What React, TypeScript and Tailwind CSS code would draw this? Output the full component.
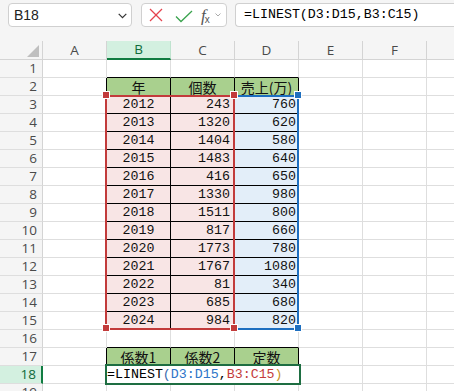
import React from 'react';

const years = [2012, 2013, 2014, 2015, 2016, 2017, 2018, 2019, 2020, 2021, 2022, 2023, 2024];
const counts = [243, 1320, 1404, 1483, 416, 1330, 1511, 817, 1773, 1767, 81, 685, 984];
const sales = [760, 620, 580, 640, 650, 980, 800, 660, 780, 1080, 340, 680, 820];
const COLS = ['A', 'B', 'C', 'D', 'E', 'F', 'G'];
const ROWS = Array.from({ length: 19 }, (_, i) => i + 1);

const inTable = (r: number, c: number) =>
  ((r >= 2 && r <= 15) || r === 17) && c >= 1 && c <= 3;

type CellInfo = { text?: string; align?: 'center' | 'right'; bg?: string; kanji?: boolean; pad?: string };

function cellInfo(r: number, c: number): CellInfo {
  if (r === 2 || r === 17) {
    const labels = r === 2 ? ['年', '個数', '売上(万)'] : ['係数1', '係数2', '定数'];
    if (c >= 1 && c <= 3) return { text: labels[c - 1], align: 'center', bg: 'bg-[#a9d08e]', kanji: true };
  }
  if (r >= 3 && r <= 15) {
    const i = r - 3;
    if (c === 1) return { text: String(years[i]), align: 'center', bg: 'bg-[#f8e5e5]' };
    if (c === 2) return { text: String(counts[i]), align: 'right', bg: 'bg-[#f8e5e5]', pad: 'pr-[4px]' };
    if (c === 3) return { text: String(sales[i]), align: 'right', bg: 'bg-[#e3eef9]', pad: 'pr-[2px]' };
  }
  return {};
}

function Cell({ r, c }: { r: number; c: number }) {
  const info = cellInfo(r, c);
  const rightBlack = inTable(r, c) || inTable(r, c + 1);
  const bottomBlack = inTable(r, c) || inTable(r + 1, c);
  return (
    <div
      className={[
        'w-[64px] shrink-0 h-full flex items-center border-r border-b overflow-hidden whitespace-nowrap text-[#111]',
        rightBlack ? 'border-r-black' : 'border-r-[#dedede]',
        bottomBlack ? 'border-b-black' : 'border-b-[#dedede]',
        info.bg ?? 'bg-white',
        info.align === 'right' ? 'justify-end' : 'justify-center',
        info.pad ?? '',
        info.kanji
          ? "font-['Noto_Sans_CJK_JP',sans-serif] text-[14px] leading-[16px]"
          : "font-['Liberation_Mono','Noto_Sans_CJK_JP',monospace] text-[13.3px] leading-[17px]",
      ].join(' ')}
    >
      {info.text}
    </div>
  );
}

function Handle({ left, top, color }: { left: number; top: number; color: string }) {
  return (
    <div
      className={`absolute w-[8px] h-[8px] border border-white ${color}`}
      style={{ left, top }}
    />
  );
}

export default function App() {
  return (
    <div className="relative w-[454px] h-[391px] overflow-hidden bg-white font-['Open_Sans',sans-serif]">
      {/* Top bar */}
      <div className="h-[41px] bg-[#f5f5f5] flex items-start pt-[3px]">
        <div className="ml-[8px] w-[124px] h-[24px] shrink-0 bg-white border border-[#d0d0d0] rounded-[4px] flex items-center justify-between pl-[5px] pr-[4px]">
          <span className="font-['Liberation_Sans',sans-serif] text-[14px] text-[#222]">B18</span>
          <svg width="9" height="6" viewBox="0 0 9 6" className="mt-[1px]">
            <polyline points="0.7,0.8 4.5,4.6 8.3,0.8" fill="none" stroke="#333" strokeWidth="1.2" />
          </svg>
        </div>
        <div className="ml-[9px] w-[86px] h-[24px] shrink-0 bg-white border border-[#d0d0d0] rounded-[4px] flex items-center pl-[7px]">
          <svg width="14" height="14" viewBox="0 0 14 14">
            <line x1="1" y1="1" x2="13" y2="13" stroke="#e5434e" strokeWidth="1.3" />
            <line x1="13" y1="1" x2="1" y2="13" stroke="#e5434e" strokeWidth="1.3" />
          </svg>
          <svg width="18" height="13" viewBox="0 0 18 13" className="ml-[12px] mt-[2px]">
            <polyline points="1,6.5 6,11.5 17,1" fill="none" stroke="#3aa34e" strokeWidth="1.3" />
          </svg>
          <span className="ml-[8px] flex items-end text-[#555] leading-none">
            <span className="font-['Liberation_Serif',serif] italic text-[17px]">f</span>
            <span className="font-['Liberation_Sans',sans-serif] text-[10px] -ml-[1px] mb-[-1px]">x</span>
          </span>
          <svg width="6" height="4" viewBox="0 0 6 4" className="ml-[5px]">
            <polyline points="0.5,0.5 3,3 5.5,0.5" fill="none" stroke="#aaa" strokeWidth="1" />
          </svg>
        </div>
        <div className="ml-[8px] flex-1 h-[24px] bg-white border border-r-0 border-[#d0d0d0] rounded-l-[4px] flex items-center pl-[8px] font-['Liberation_Mono',monospace] text-[13.3px] text-black whitespace-nowrap">
          =LINEST(D3:D15,B3:C15)
        </div>
      </div>

      {/* Column header */}
      <div className="flex h-[19px] bg-[#f5f5f5]">
        <div className="w-[43px] shrink-0 h-full border-r border-b border-[#d4d4d4] flex items-end justify-end pr-[3px] pb-[2px]">
          <svg width="12" height="12" viewBox="0 0 12 12">
            <polygon points="12,0 12,12 0,12" fill="#bfbfbf" />
          </svg>
        </div>
        {COLS.map((col) => (
          <div
            key={col}
            className={[
              'w-[64px] shrink-0 h-full flex items-center justify-center text-[13.5px] border-r',
              col === 'B'
                ? 'bg-[#d3f0e0] text-[#0e6b3a] border-b-2 border-b-[#107c41] border-r-[#bfe3cf]'
                : 'text-[#4a4a4a] border-b border-b-[#d4d4d4] border-r-[#d4d4d4]',
            ].join(' ')}
          >
            {col === 'G' ? '' : col}
          </div>
        ))}
      </div>

      {/* Rows */}
      {ROWS.map((r) => (
        <div key={r} className="flex h-[18px]">
          <div
            className={[
              'w-[43px] shrink-0 h-full flex items-center justify-end pr-[5px] text-[13.5px] border-b border-b-[#dedede]',
              r === 18
                ? 'bg-[#d3f0e0] text-[#0e6b3a] border-r-2 border-r-[#107c41]'
                : 'bg-[#f5f5f5] text-[#4a4a4a] border-r border-r-[#d4d4d4]',
            ].join(' ')}
          >
            {r}
          </div>
          {COLS.map((_, c) => (
            <Cell key={c} r={r} c={c} />
          ))}
        </div>
      ))}

      {/* Reference highlights */}
      <div className="absolute left-[233px] top-[95px] w-[66px] h-[235px] border-2 border-[#1e6fc0]" />
      <div className="absolute left-[105px] top-[95px] w-[130px] h-[235px] border-2 border-[#c23b3b]" />
      <Handle left={102} top={91} color="bg-[#c23b3b]" />
      <Handle left={230} top={91} color="bg-[#c23b3b]" />
      <Handle left={102} top={324} color="bg-[#c23b3b]" />
      <Handle left={230} top={324} color="bg-[#c23b3b]" />
      <Handle left={294} top={91} color="bg-[#1e6fc0]" />
      <Handle left={294} top={324} color="bg-[#1e6fc0]" />

      {/* Cell editor */}
      <div className="absolute left-[105px] top-[364px] w-[196px] h-[21px] border-2 border-[#1e6e42] bg-white flex items-center font-['Liberation_Mono',monospace] text-[13.3px] leading-[17px] whitespace-nowrap">
        <span className="text-black">=LINEST</span>
        <span className="text-[#3a6cae]">(</span>
        <span className="text-[#2e75c8]">D3:D15</span>
        <span className="text-black">,</span>
        <span className="text-[#c43b3b]">B3:C15</span>
        <span className="text-[#c9921e]">)</span>
      </div>
    </div>
  );
}
